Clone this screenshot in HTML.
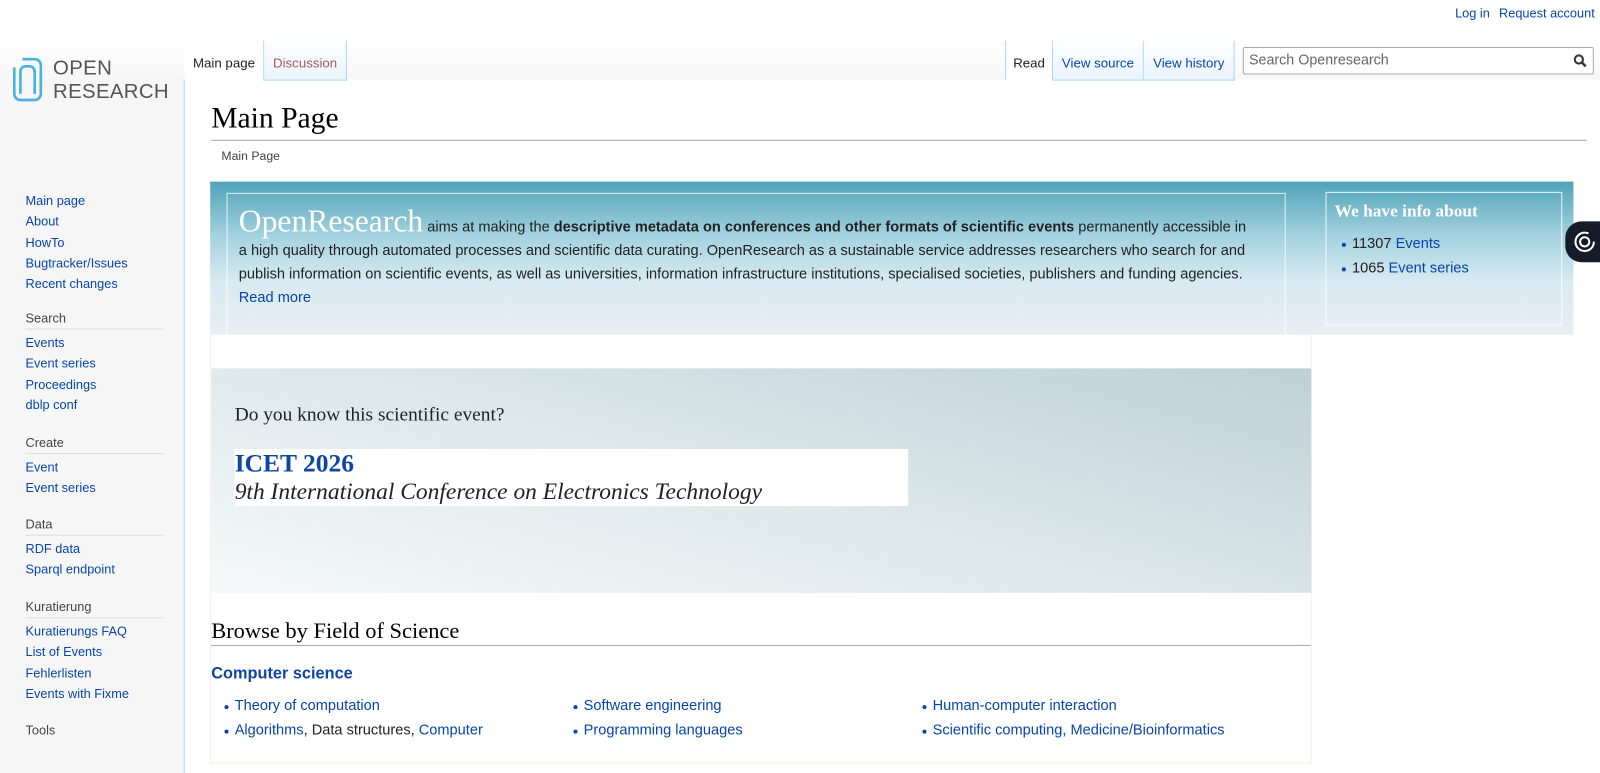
<!DOCTYPE html>
<html><head><meta charset="utf-8">
<style>
*{box-sizing:border-box}
html,body{margin:0;width:1600px;height:740px;overflow:hidden;background:#f6f6f6}
#wrap{position:absolute;left:0;top:0;width:1568px;height:740px;transform:scale(1.0204);transform-origin:0 0;font-family:"Liberation Sans",Arial,sans-serif}
a{color:#0645ad;text-decoration:none}
.abs{position:absolute}
#topbg{position:absolute;left:0;top:0;width:1600px;height:80px;background:linear-gradient(#fff 0,#fff 40px,#f6f6f6 80px)}
#content{position:absolute;left:180px;top:78px;width:1420px;height:680px;background:#fff;border-left:1px solid #a7d7f9}
.personal{position:absolute;top:6px;left:1426px;font-size:12.5px;white-space:nowrap}
.personal a{margin-right:9px}
.tab{position:absolute;top:40px;height:39px;font-size:13px;padding-top:14px;text-align:center;background:linear-gradient(#fff 0,#eaf3ff 100%);border-right:1px solid #a7d7f9;border-bottom:1px solid #a7d7f9}
.tab.sel{background:#fff;border-bottom:none;color:#222}
.side{position:absolute;left:25px;font-size:12.5px;line-height:20.3px}
.side .h{color:#444;border-bottom:1px solid #ddd;width:135px;margin-bottom:3px;line-height:19px}
.side div{white-space:nowrap}
ul{margin:0;padding:0;list-style:none}
li{position:relative;padding-left:12px}
li:before{content:"";position:absolute;left:2px;top:50%;width:4px;height:4px;border-radius:50%;background:#0645ad;margin-top:-1px}
</style></head><body>
<div id="wrap">
<div id="topbg"></div>
<div id="content"></div>
<div class="personal"><a>Log in</a><a>Request account</a></div>

<svg class="abs" style="left:12px;top:56px" width="30" height="45" viewBox="0 0 30 45">
<path d="M10 2 H22 A6 6 0 0 1 28 8 V36 A6 6 0 0 1 22 42 H8 A6 6 0 0 1 2 36 V10" fill="none" stroke="#4ab3dc" stroke-width="2.6"/>
<path d="M8 36 V14 A5 5 0 0 1 13 9 H17 A5 5 0 0 1 22 14 V36" fill="none" stroke="#4ab3dc" stroke-width="2.6"/>
</svg>
<div class="abs" style="left:52px;top:56px;font-size:20px;line-height:23px;color:#555;letter-spacing:0.3px">OPEN<br>RESEARCH</div>

<div class="tab sel" style="left:181px;width:78px;border-right:1px solid #a7d7f9">Main page</div>
<div class="tab" style="left:259px;width:81px;color:#a55858">Discussion</div>
<div class="tab sel" style="left:985px;width:47px;border-left:1px solid #a7d7f9">Read</div>
<div class="tab" style="left:1032px;width:89px"><a>View source</a></div>
<div class="tab" style="left:1121px;width:89px"><a>View history</a></div>
<div class="abs" style="left:1218px;top:46px;width:344px;height:27px;border:1px solid #aaa;border-radius:2px;background:#fff;font-size:14px;color:#666;padding:3px 5px">Search Openresearch
<svg class="abs" style="right:6px;top:6px" width="13" height="13" viewBox="0 0 13 13"><circle cx="5.3" cy="5.3" r="4" fill="none" stroke="#333" stroke-width="2"/><path d="M8.3 8.3 L12 12" stroke="#333" stroke-width="2.4"/></svg></div>

<div class="abs" style="left:207px;top:100px;font-family:'Liberation Serif',serif;font-size:29px;color:#000">Main Page</div>
<div class="abs" style="left:207px;top:137px;width:1348px;height:1px;background:#a2a9b1"></div>
<div class="abs" style="left:217px;top:146px;font-size:12px;color:#444">Main Page</div>

<div class="abs" style="left:206px;top:178px;width:1336px;height:150px;background:linear-gradient(#4fa3b8 0,#a3d1df 35%,#d8eaf1 65%,#e8eef1 100%)"></div>
<div class="abs" style="left:222px;top:189px;width:1038px;height:139px;border:1px solid rgba(255,255,255,.8);border-bottom:none"></div>
<div class="abs" style="left:234px;top:205px;width:990px;font-size:14.3px;line-height:23px;color:#222">
<span style="font-family:'Liberation Serif',serif;font-size:31px;color:#fff">OpenResearch</span> aims at making the <b>descriptive metadata on conferences and other formats of scientific events</b> permanently accessible in a high quality through automated processes and scientific data curating. OpenResearch as a sustainable service addresses researchers who search for and publish information on scientific events, as well as universities, information infrastructure institutions, specialised societies, publishers and funding agencies.<br><a>Read more</a></div>
<div class="abs" style="left:1299px;top:188px;width:232px;height:131px;border:1px solid rgba(255,255,255,.85)"></div>
<div class="abs" style="left:1308px;top:197px;font-family:'Liberation Serif',serif;font-size:17px;font-weight:bold;color:#fff">We have info about</div>
<ul class="abs" style="left:1313px;top:227px;font-size:14.3px;line-height:24px;color:#222">
<li>11307 <a>Events</a></li><li>1065 <a>Event series</a></li></ul>

<div class="abs" style="left:1534px;top:217px;width:80px;height:40px;background:#161b2a;border-radius:16px 0 0 16px"></div>
<svg class="abs" style="left:1541px;top:225px" width="24" height="24" viewBox="0 0 24 24"><circle cx="12" cy="12" r="9" fill="none" stroke="#fff" stroke-width="2" stroke-dasharray="46 10"/><circle cx="12" cy="12" r="4.5" fill="none" stroke="#fff" stroke-width="2"/></svg>

<div class="abs" style="left:206px;top:328px;width:1080px;height:420px;border:1px solid #f3f0e0;border-top:none"></div>
<div class="abs" style="left:207px;top:361px;width:1078px;height:220px;background:linear-gradient(15deg,#f6f9fa 0%,#dce7ea 50%,#bdd1d7 100%)"></div>
<div class="abs" style="left:230px;top:396px;font-family:'Liberation Serif',serif;font-size:19px;color:#222">Do you know this scientific event?</div>
<div class="abs" style="left:230px;top:440px;width:660px;height:56px;background:#fff"></div>
<div class="abs" style="left:230px;top:440px;font-family:'Liberation Serif',serif;font-size:25px;font-weight:bold;color:#0d47a1;line-height:30px">ICET 2026</div>
<div class="abs" style="left:230px;top:469px;font-family:'Liberation Serif',serif;font-size:23px;font-style:italic;color:#222">9th International Conference on Electronics Technology</div>

<div class="abs" style="left:207px;top:605px;font-family:'Liberation Serif',serif;font-size:22px;color:#000">Browse by Field of Science</div>
<div class="abs" style="left:207px;top:632px;width:1078px;height:1px;background:#a2a9b1"></div>
<div class="abs" style="left:207px;top:652px;font-size:16px;font-weight:bold;color:#0d47a1">Computer science</div>
<ul class="abs" style="left:218px;top:680px;font-size:14.3px;line-height:24px;color:#222"><li><a>Theory of computation</a></li><li><a>Algorithms</a>, Data structures, <a>Computer</a></li></ul>
<ul class="abs" style="left:560px;top:680px;font-size:14.3px;line-height:24px"><li><a>Software engineering</a></li><li><a>Programming languages</a></li></ul>
<ul class="abs" style="left:902px;top:680px;font-size:14.3px;line-height:24px"><li><a>Human-computer interaction</a></li><li><a>Scientific computing, Medicine/Bioinformatics</a></li></ul>

<div class="side" style="top:187px"><div><a>Main page</a></div><div><a>About</a></div><div><a>HowTo</a></div><div><a>Bugtracker/Issues</a></div><div><a>Recent changes</a></div></div>
<div class="side" style="top:303px"><div class="h">Search</div><div><a>Events</a></div><div><a>Event series</a></div><div><a>Proceedings</a></div><div><a>dblp conf</a></div></div>
<div class="side" style="top:425px"><div class="h">Create</div><div><a>Event</a></div><div><a>Event series</a></div></div>
<div class="side" style="top:505px"><div class="h">Data</div><div><a>RDF data</a></div><div><a>Sparql endpoint</a></div></div>
<div class="side" style="top:586px"><div class="h">Kuratierung</div><div><a>Kuratierungs FAQ</a></div><div><a>List of Events</a></div><div><a>Fehlerlisten</a></div><div><a>Events with Fixme</a></div></div>
<div class="side" style="top:707px"><div class="h" style="border:none">Tools</div></div>
</div>
</body></html>
